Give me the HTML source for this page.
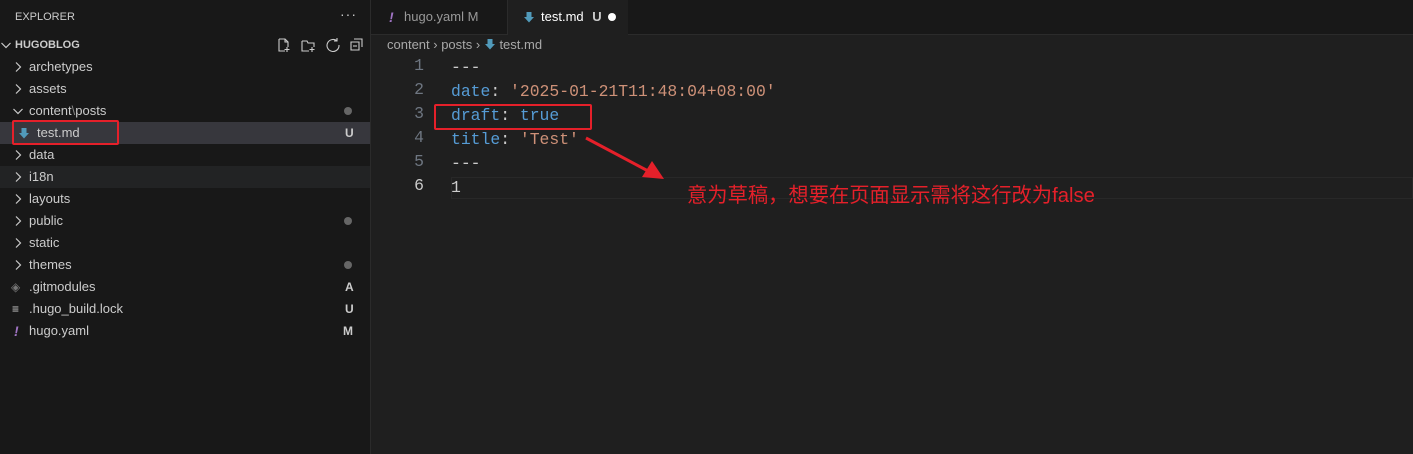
<!DOCTYPE html><html><head><meta charset="utf-8"><style>
body{margin:0;width:1413px;height:454px;background:#1f1f1f;font-family:"Liberation Sans","Noto Sans CJK SC",sans-serif;overflow:hidden;position:relative;color:#ccc}
.side{position:absolute;left:0;top:0;width:370px;height:454px;background:#181818;border-right:1px solid #2b2b2b}
.row{position:absolute;left:0;width:370px;height:22px;line-height:22px;font-size:13px;color:#ccc}
.row .n{position:absolute;left:29px}
.row .c{position:absolute;left:13px;top:0;color:#ccc;font-size:12px}
.row svg.ch{position:absolute;left:12px;top:5px}
.row .b{position:absolute;left:345px;font-weight:bold;font-size:12px;color:#ccc}
.dot{position:absolute;left:344px;top:7px;width:8px;height:8px;border-radius:50%;background:#666}
.tabs{position:absolute;left:371px;top:0;right:0;height:34px;background:#181818;border-bottom:1px solid #2b2b2b}
.tab{position:absolute;top:0;height:34px;line-height:34px;font-size:13px}
.code{position:absolute;font-family:"Liberation Mono",monospace;font-size:16.4px;line-height:24px}
.ln{position:absolute;left:400px;width:24px;text-align:right;color:#6e7681;font-family:"Liberation Mono",monospace;font-size:16.4px}
.k{color:#569cd6}.s{color:#ce9178}.w{color:#ccc}
</style></head><body>
<svg width="0" height="0" style="position:absolute"><defs>
<symbol id="r" viewBox="0 0 12 12"><path d="M4 1.5l4.5 4.5-4.5 4.5" stroke="#ccc" stroke-width="1.2" fill="none"/></symbol>
<symbol id="d" viewBox="0 0 12 12"><path d="M1.5 4l4.5 4.5 4.5-4.5" stroke="#ccc" stroke-width="1.2" fill="none"/></symbol>
<symbol id="md" viewBox="0 0 12 12"><path d="M3.5 1h5v5h2.5L6 11.5 1 6h2.5z" fill="#519aba"/></symbol>
</defs></svg>
<div class="side">
<div style="position:absolute;left:15px;top:11px;font-size:11px;color:#ccc">EXPLORER</div>
<div style="position:absolute;left:340px;top:6px;font-size:14px;color:#ccc;letter-spacing:1px">···</div>
<div class="row" style="top:34px"><svg class="ch" style="left:0" width="12" height="12"><use href="#d"/></svg><span style="position:absolute;left:15px;font-weight:bold;font-size:11px">HUGOBLOG</span>
<svg style="position:absolute;left:276px;top:3px" width="90" height="16" fill="none" stroke="#ccc" stroke-width="1.1"><path d="M3 2h6l3 3v5M3 2v12h6M9 2v3h3M11 10v5M8.5 12.5h5"/><path d="M26 4h5l1 2h6v4M26 4v10h7M36 10v5M33.5 12.5h5"/><path d="M61 4a6 6 0 1 0 2 4M61 1v3h-3"/><path d="M75 5h8v8h-8zM78 2h8v8"/><path d="M77 9h4"/></svg></div>
<div class="row" style="top:56px"><svg class="ch" width="12" height="12"><use href="#r"/></svg><span class="n">archetypes</span></div>
<div class="row" style="top:78px"><svg class="ch" width="12" height="12"><use href="#r"/></svg><span class="n">assets</span></div>
<div class="row" style="top:100px"><svg class="ch" width="12" height="12"><use href="#d"/></svg><span class="n">content<span style="color:#888">\</span>posts</span><div class="dot"></div></div>
<div class="row" style="top:122px;background:#37373d"><svg style="position:absolute;left:18px;top:5px" width="12" height="12"><use href="#md"/></svg><span class="n" style="left:37px">test.md</span><span class="b">U</span></div>
<div class="row" style="top:144px"><svg class="ch" width="12" height="12"><use href="#r"/></svg><span class="n">data</span></div>
<div class="row" style="top:166px;background:#222324"><svg class="ch" width="12" height="12"><use href="#r"/></svg><span class="n">i18n</span></div>
<div class="row" style="top:188px"><svg class="ch" width="12" height="12"><use href="#r"/></svg><span class="n">layouts</span></div>
<div class="row" style="top:210px"><svg class="ch" width="12" height="12"><use href="#r"/></svg><span class="n">public</span><div class="dot"></div></div>
<div class="row" style="top:232px"><svg class="ch" width="12" height="12"><use href="#r"/></svg><span class="n">static</span></div>
<div class="row" style="top:254px"><svg class="ch" width="12" height="12"><use href="#r"/></svg><span class="n">themes</span><div class="dot"></div></div>
<div class="row" style="top:276px"><span class="c" style="color:#777;left:11px">◈</span><span class="n">.gitmodules</span><span class="b">A</span></div>
<div class="row" style="top:298px"><span class="c" style="left:12px">≡</span><span class="n">.hugo_build.lock</span><span class="b">U</span></div>
<div class="row" style="top:320px"><span class="c" style="color:#a074c4;font-weight:bold;left:14px;font-style:italic;font-size:14px">!</span><span class="n">hugo.yaml</span><span class="b" style="left:343px">M</span></div>
<div style="position:absolute;left:12px;top:120px;width:103px;height:21px;border:2.5px solid #e5202a;border-radius:2px"></div>
</div>
<div class="tabs">
<div class="tab" style="left:0;width:136px;border-right:1px solid #2b2b2b"><span style="position:absolute;left:18px;color:#a074c4;font-weight:bold;font-style:italic;font-size:14px">!</span><span style="position:absolute;left:33px;color:#999">hugo.yaml <span style="color:#999">M</span></span></div>
<div class="tab" style="left:137px;width:120px;background:#1f1f1f;height:35px"><svg style="position:absolute;left:15px;top:11px" width="12" height="12"><use href="#md"/></svg><span style="position:absolute;left:33px;color:#fff">test.md <b style="color:#ccc;margin-left:5px">U</b></span><span style="position:absolute;left:100px;top:13px;width:8px;height:8px;border-radius:50%;background:#fff"></span></div>
</div>
<div style="position:absolute;left:387px;top:37px;font-size:13px;color:#a9a9a9">content › posts › <svg width="12" height="12" style="vertical-align:-1px"><use href="#md"/></svg> test.md</div>
<div style="position:absolute;left:451px;top:177px;width:962px;height:22px;border:1px solid #282828;box-sizing:border-box"></div>
<div class="ln" style="top:56px">1</div><div class="ln" style="top:80px">2</div><div class="ln" style="top:104px">3</div><div class="ln" style="top:128px">4</div><div class="ln" style="top:152px">5</div><div class="ln" style="top:176px;color:#ccc">6</div>
<div class="code" style="left:451px;top:56px;white-space:pre"><span class="w">---</span>
<span class="k">date</span><span class="w">: </span><span class="s">'2025-01-21T11:48:04+08:00'</span>
<span class="k">draft</span><span class="w">: </span><span class="k">true</span>
<span class="k">title</span><span class="w">: </span><span class="s">'Test'</span>
<span class="w">---</span>
<span class="w">1</span></div>
<div style="position:absolute;left:434px;top:104px;width:154px;height:22px;border:2.5px solid #e5202a;border-radius:2px"></div>
<svg style="position:absolute;left:0;top:0" width="1413" height="454"><line x1="586" y1="138" x2="650" y2="172" stroke="#e5202a" stroke-width="3"/><polygon points="664,179 642,177 652,161" fill="#e5202a"/></svg>
<div style="position:absolute;left:687px;top:178px;font-size:20.3px;color:#e5202a">意为草稿，想要在页面显示需将这行改为false</div>
</body></html>
